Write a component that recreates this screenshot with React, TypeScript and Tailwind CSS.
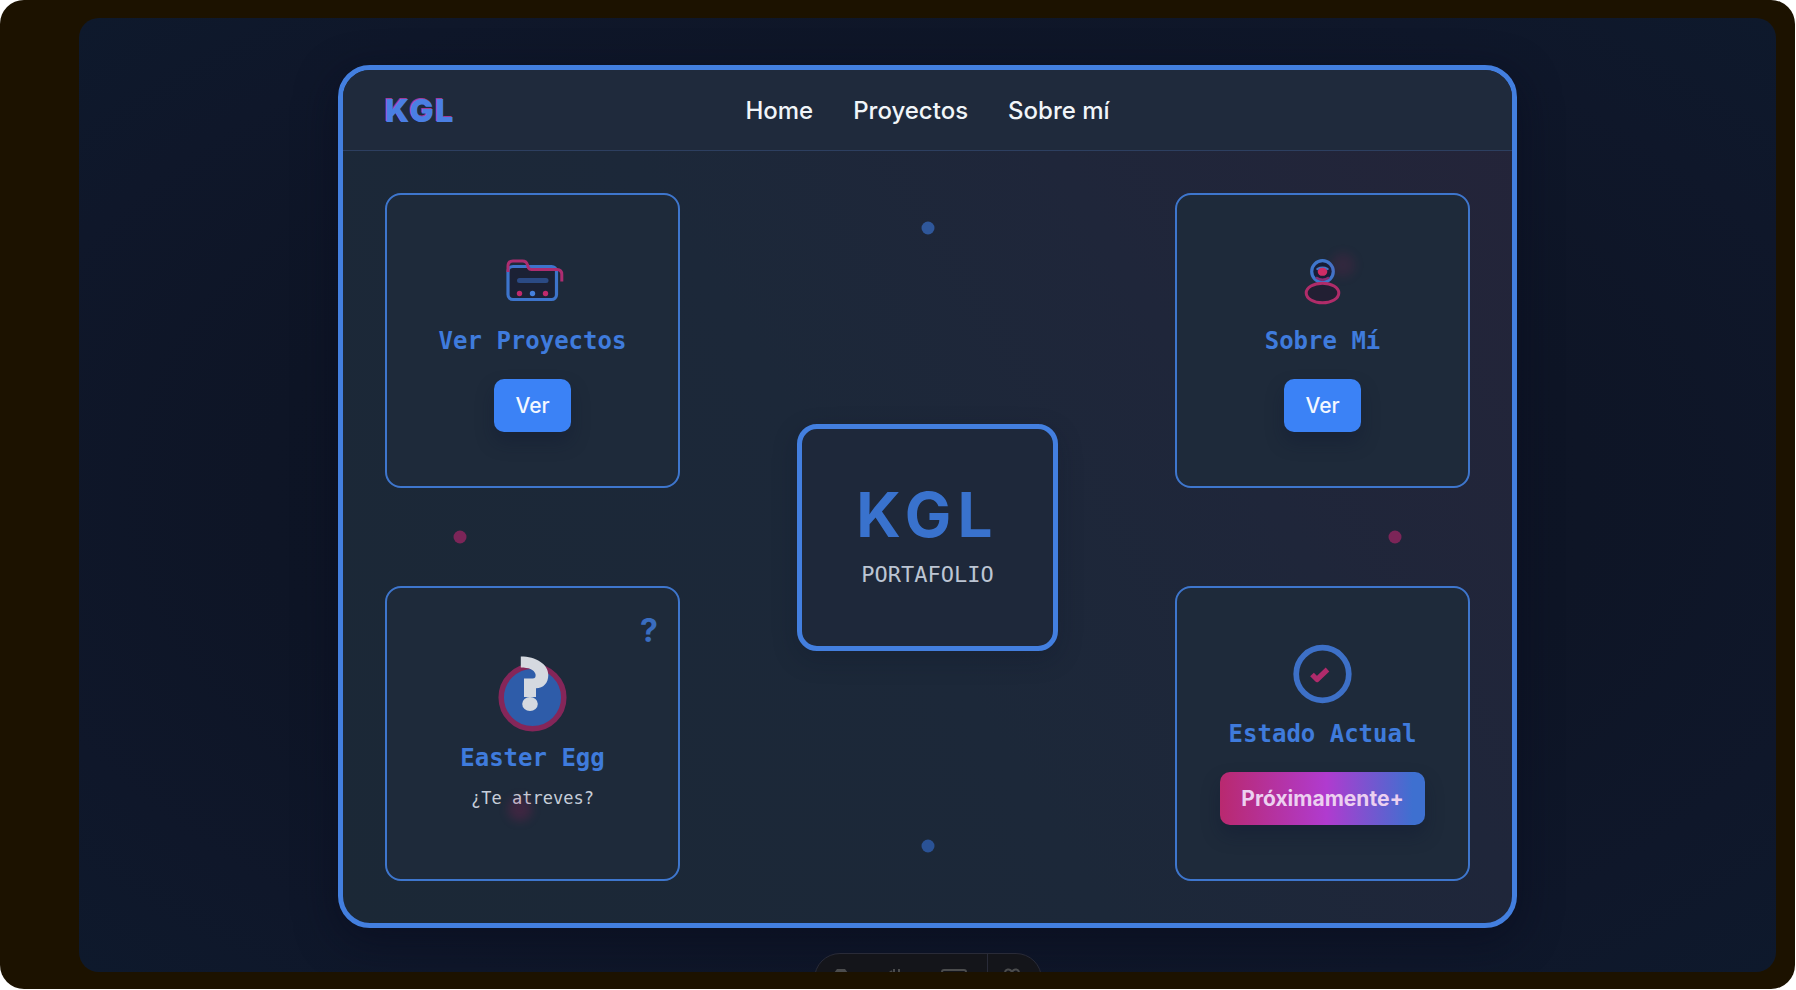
import type { ReactNode } from "react";

const LINKS = [
  { label: "Home", href: "#home" },
  { label: "Proyectos", href: "#proyectos" },
  { label: "Sobre mí", href: "#sobre-mi" },
];

function FolderIcon() {
  return (
    <svg viewBox="0 0 64 64" className="size-16" fill="none" aria-hidden="true">
      <rect x="7" y="17.500" width="48.500" height="33" rx="5" fill="#1b2135" stroke="#3d74cb" strokeWidth="3.200" />
      <path
        d="M7 23V17Q7 12 12 12H21.500Q25.500 12 26.500 16L27.500 19Q28.300 20.500 30.500 20.500H56Q60.800 20.500 60.800 25.500V32.500"
        stroke="#ad2d70"
        strokeWidth="3"
        strokeLinejoin="round"
      />
      <path d="M18.500 31.500H45" stroke="#2b4a85" strokeWidth="5" strokeLinecap="round" />
      <circle cx="18.500" cy="44.500" r="2.700" fill="#c02a6c" />
      <circle cx="31.500" cy="44.500" r="2.700" fill="#4580dc" />
      <circle cx="44.500" cy="44.500" r="2.700" fill="#c02a6c" />
    </svg>
  );
}

function PersonIcon() {
  return (
    <svg viewBox="0 0 64 64" className="size-16" fill="none" aria-hidden="true">
      <circle cx="31.500" cy="22.500" r="10.800" fill="#171e38" stroke="#3f76cc" strokeWidth="3.200" />
      <path d="M26.500 20Q31.500 17.500 36.500 20" stroke="#4678c8" strokeWidth="2.500" strokeLinecap="round" />
      <ellipse cx="31.500" cy="22.800" rx="4.800" ry="4" fill="#cf2d66" />
      <path d="M25 28.500Q31.500 33 38 28.500" stroke="#8a2c72" strokeWidth="2.500" />
      <ellipse cx="31.500" cy="44" rx="16.300" ry="9.800" fill="#221f33" stroke="#b02c69" strokeWidth="3" />
    </svg>
  );
}

function MysteryIcon() {
  return (
    <svg viewBox="0 0 64 72" className="h-[72px] w-16 overflow-visible" fill="none" aria-hidden="true">
      <circle cx="31.500" cy="39.500" r="31.300" fill="#2e5ca9" stroke="#852659" strokeWidth="5.500" />
      <path
        d="M19.800 -1.500C35 -1.500 47.300 6 47.300 17C47.300 25 42.500 30.200 35 30.200V39H23V20.500H31.500Q35.300 20.500 34.500 16C33 11.500 27.500 9.500 19.800 9.500Z"
        fill="#d5d9e0"
      />
      <ellipse cx="29" cy="46" rx="7.800" ry="7" fill="#d5d9e0" />
    </svg>
  );
}

function StatusIcon() {
  return (
    <svg viewBox="0 0 64 64" className="size-16" fill="none" aria-hidden="true">
      <circle cx="31.500" cy="32" r="26.300" stroke="#3d70c7" strokeWidth="5.700" />
      <path d="M21 32.500L26 37.500L36.500 27.500" stroke="#b02b6b" strokeWidth="5.200" strokeLinejoin="round" />
    </svg>
  );
}

function Card({ title, icon, children }: { title: string; icon: ReactNode; children: ReactNode }) {
  return (
    <section className="relative flex aspect-square flex-col items-center justify-center rounded-2xl border-2 border-[#3e76cd] bg-[#1e2a3a]">
      {icon}
      <h2 className="mt-3 font-['DejaVu_Sans_Mono',monospace] text-2xl leading-8 font-bold text-[#3f7bdc]">
        {title}
      </h2>
      {children}
    </section>
  );
}

function ViewButton() {
  return (
    <button
      type="button"
      className="mt-[22px] h-[53px] rounded-[10px] bg-[#3b82f6] px-[21px] text-[21px] font-medium text-[#f4f8ff] shadow-[0_10px_18px_rgba(15,23,50,0.35)]"
    >
      Ver
    </button>
  );
}

function Toolbar() {
  return (
    <div className="absolute -bottom-[33px] left-1/2 flex h-[52px] w-[228px] -translate-x-1/2 rounded-[26px] border border-[#292b38] bg-[#14151a] text-[#4b4c4d]">
      <div className="flex flex-1 items-start justify-around pt-[15px]">
        <svg viewBox="0 0 14 14" className="size-3.5" fill="currentColor" aria-hidden="true">
          <path d="M3 0H11L14 4V14H0V4Z" />
        </svg>
        <svg viewBox="0 0 14 14" className="size-3.5" stroke="currentColor" strokeWidth="2" aria-hidden="true">
          <path d="M1 5L5 2M7 0V4M12 0V4M2 10H12" />
        </svg>
        <svg viewBox="0 0 26 14" className="h-3.5 w-[26px]" fill="none" stroke="currentColor" strokeWidth="2" aria-hidden="true">
          <rect x="1" y="1" width="24" height="12" rx="2" />
        </svg>
      </div>
      <div className="flex w-[54px] items-start justify-center border-l border-[#292b38] pt-3.5 pr-1">
        <svg viewBox="0 0 16 16" className="size-4" fill="none" stroke="currentColor" strokeWidth="2" aria-hidden="true">
          <path d="M8 4C6 0 1 1 1 5C1 9 8 15 8 15C8 15 15 9 15 5C15 1 10 0 8 4Z" />
        </svg>
      </div>
    </div>
  );
}

export default function App() {
  return (
    <div className="flex min-h-screen bg-white pr-px pb-px font-['Inter',sans-serif]">
      <div className="flex flex-1 rounded-3xl bg-[#1c1200] pt-[18px] pr-[19px] pb-[17px] pl-[79px]">
        <div className="relative flex flex-1 flex-col items-center justify-center overflow-hidden rounded-[20px] bg-[radial-gradient(ellipse_at_center,#0d1322_0%,#0e1526_55%,#0f172a_80%,#0e192c_100%)] pt-[3px]">
          <main className="w-full max-w-[1179px] overflow-hidden rounded-[32px] border-[5px] border-[#437fdf] bg-[linear-gradient(58deg,#1b2836_0%,#1c2839_45%,#1f263a_70%,#242439_100%)] shadow-[0_12px_40px_rgba(8,12,30,0.6)]">
            <header className="grid h-[81px] grid-cols-[1fr_auto_1fr] items-center border-b border-[#2d3f60] bg-[#1f2a3c] px-[42px] pt-0.5">
              <a
                href="#home"
                className="text-[32px] leading-10 font-black tracking-wider text-[#4a7fe4] [text-shadow:-1px_-1px_0_#a13a9c]"
              >
                KGL
              </a>
              <nav className="flex gap-10">
                {LINKS.map((link) => (
                  <a key={link.href} href={link.href} className="text-2xl font-medium text-[#f1f5f9]">
                    {link.label}
                  </a>
                ))}
              </nav>
            </header>

            <div className="relative grid grid-cols-[295px_1fr_295px] gap-y-[98px] p-[42px]">
              <Card title="Ver Proyectos" icon={<FolderIcon />}>
                <ViewButton />
              </Card>

              <div className="col-start-2 row-span-2 row-start-1 flex h-[227px] w-[261px] flex-col items-center justify-center self-center justify-self-center rounded-[20px] border-[5px] border-[#437fdf] bg-[#1e283a] shadow-[0_8px_24px_rgba(12,18,40,0.25)]">
                <h1 className="text-[62px] leading-[64px] font-bold tracking-widest text-[#3972cd]">KGL</h1>
                <p className="mt-3 font-['DejaVu_Sans_Mono',monospace] text-[22px] leading-8 text-[#bcc5d3]">
                  PORTAFOLIO
                </p>
              </div>

              <div className="col-start-3">
                <Card title="Sobre Mí" icon={<PersonIcon />}>
                  <ViewButton />
                  <span className="absolute top-[58px] left-[154px] size-6 rounded-full bg-[#be185d]/12 blur-[5px]" />
                </Card>
              </div>

              <Card title="Easter Egg" icon={<MysteryIcon />}>
                <p className="mt-3 font-['DejaVu_Sans_Mono',monospace] text-[17px] leading-6 text-[#c6ced9]">
                  ¿Te atreves?
                </p>
                <span className="absolute top-[27px] right-5 text-[32px] leading-8 font-bold text-[#3a6dc0]">?</span>
                <span className="absolute bottom-[58px] left-[121px] size-6 rounded-full bg-[#be185d]/20 blur-[5px]" />
              </Card>

              <div className="col-start-3">
                <Card title="Estado Actual" icon={<StatusIcon />}>
                  <button
                    type="button"
                    className="mt-[22px] h-[53px] rounded-[10px] bg-[linear-gradient(90deg,#b9296f_0%,#b03bcf_52%,#3e70d0_94%)] px-[21px] text-[21px] font-bold text-[#ecd0f0] shadow-[0_10px_18px_rgba(15,23,50,0.35)]"
                  >
                    Próximamente+
                  </button>
                </Card>
              </div>

              <span className="absolute top-[10%] left-1/2 size-[13px] -translate-x-1/2 -translate-y-1/2 rounded-full bg-[#2f579a]" />
              <span className="absolute bottom-[10%] left-1/2 size-[13px] -translate-x-1/2 translate-y-1/2 rounded-full bg-[#2a5295]" />
              <span className="absolute top-1/2 left-[10%] size-[13px] -translate-x-1/2 -translate-y-1/2 rounded-full bg-[#7c2558]" />
              <span className="absolute top-1/2 right-[10%] size-[13px] translate-x-1/2 -translate-y-1/2 rounded-full bg-[#7c2558]" />
            </div>
          </main>
          <Toolbar />
        </div>
      </div>
    </div>
  );
}
